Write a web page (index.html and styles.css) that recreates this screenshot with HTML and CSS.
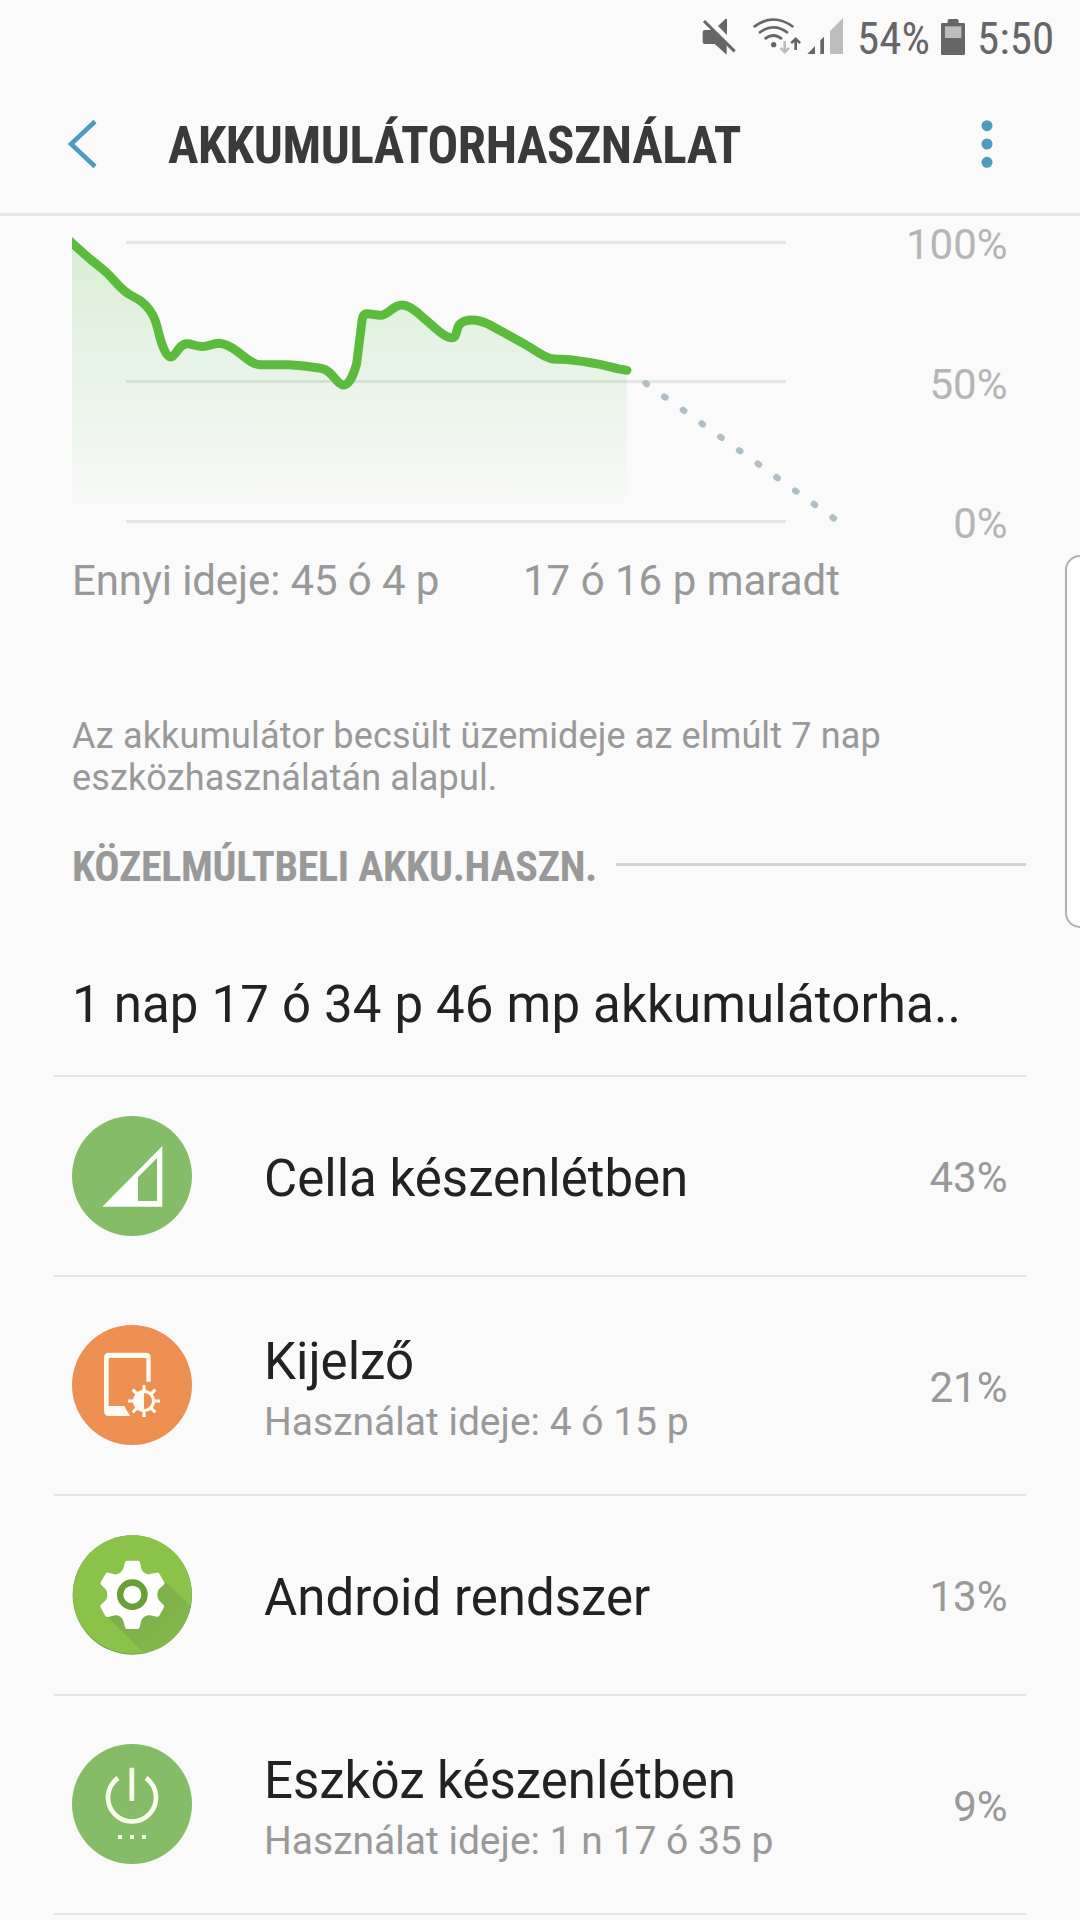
FILE: index.html
```html
<!DOCTYPE html>
<html lang="hu">
<head>
<meta charset="utf-8">
<title>Akkumulátorhasználat</title>
<link rel="stylesheet" href="styles.css">
</head>
<body>
<div class="screen">
  <div class="status-bar">
    <svg class="status-icon mute" viewBox="66 51 102 117" width="34" height="39">
      <path d="M74 90H96L114 108L140 134V164L104 132H74Q68 132 68 126V96Q68 90 74 90ZM114 78L136 57H141V105Z"/>
      <path d="M72 63L164 154" class="cut"/>
    </svg>
    <svg class="status-icon wifi" viewBox="216 51 150 117" width="50" height="39">
      <g class="arc"><path d="M221 81Q280 36 340 81"/><path d="M237 99Q280 65 324 99"/><path d="M254 117Q280 96 306 117"/></g>
      <circle cx="281" cy="134" r="8"/>
      <path class="faint" d="M310 123H318V147L325 141L330 146L314 162L299 146L304 141L310 147Z"/>
      <path d="M347 111L363 127L358 132L351 126V150H343V126L336 132L331 127Z"/>
    </svg>
    <svg class="status-icon signal" viewBox="381 51 111 117" width="37" height="39">
      <path d="M382 162L405 138V162ZM421 162V121L432 110V162Z"/>
      <path class="faint" d="M450 162V93L489 54V162Z"/>
    </svg>
    <span class="status-text percent">54%</span>
    <svg class="status-icon battery" viewBox="780 51 78 117" width="26" height="39">
      <path d="M787 69H803V62Q803 57 808 57H831Q836 57 836 62V69H851Q855 69 855 73V161Q855 165 851 165H787Q783 165 783 161V73Q783 69 787 69Z"/>
      <path class="faint" d="M795 79H844V114H795Z"/>
    </svg>
    <span class="status-text clock">5:50</span>
  </div>

  <header class="app-bar">
    <svg class="back" viewBox="0 0 32 52" width="32" height="52"><path d="M29 3.500L5 26L29 48.500"/></svg>
    <h1 class="title">AKKUMULÁTORHASZNÁLAT</h1>
    <svg class="more" viewBox="0 0 12 50" width="12" height="50"><circle cx="6" cy="6.700" r="5.500"/><circle cx="6" cy="25" r="5.500"/><circle cx="6" cy="43.300" r="5.500"/></svg>
  </header>

  <section class="chart">
    <svg class="plot" viewBox="72 216 780 320" width="780" height="320">
      <defs>
        <linearGradient id="fade" gradientUnits="userSpaceOnUse" x1="0" y1="242" x2="0" y2="514">
          <stop offset="0" stop-color="#5bbd3c" stop-opacity=".2"/>
          <stop offset=".5" stop-color="#5bbd5c" stop-opacity=".11"/>
          <stop offset="1" stop-color="#5bbd3c" stop-opacity="0"/>
        </linearGradient>
      </defs>
      <path class="grid" d="M126 242.500H786M126 381.500H786M126 521.500H786"/>
      <path class="area" d="M72 243L90 259C96 264 101 267.500 106.700 272.700C113 278.500 119 287 126.700 292.700C131 296 137 298 141.700 301.700C147 306 152 312 155 320C158 328 159 336 161.700 343.300C164 350 167 357 170.700 357C176 357 178 344 187 343.700C192 343.500 196 346.700 203 346.500C208 346.500 213 343.300 219 343.300C225 343.500 231 347 236.700 351C244 356 251 364.300 260 364.700H286.700C299 364.700 311 367 321.700 368.500C332 370 337 385 343.300 385C349 385 354 374 356.700 363.300L361.700 323.300C362.500 317 363 313.700 367.300 313.700C371 313.700 376 315.500 381 315.300C389 314.800 393 305 402 305C408 305 413 309 418.300 313.300L436.700 329.300C442 334 448 337.700 451.700 337.700C458 337.500 455 329 460 324C463 321 467 320 472.300 320C479 320 484 322 490 325L523.300 343.300C532 348 542 356 550 358.300C555 359.500 562 359 570 359.700C580 360.700 590 362.500 600 364.300C608 366 618 369 623.300 369.700L627 370.300V515H72Z"/>
      <path class="line" d="M66 237.500L72 243L90 259C96 264 101 267.500 106.700 272.700C113 278.500 119 287 126.700 292.700C131 296 137 298 141.700 301.700C147 306 152 312 155 320C158 328 159 336 161.700 343.300C164 350 167 357 170.700 357C176 357 178 344 187 343.700C192 343.500 196 346.700 203 346.500C208 346.500 213 343.300 219 343.300C225 343.500 231 347 236.700 351C244 356 251 364.300 260 364.700H286.700C299 364.700 311 367 321.700 368.500C332 370 337 385 343.300 385C349 385 354 374 356.700 363.300L361.700 323.300C362.500 317 363 313.700 367.300 313.700C371 313.700 376 315.500 381 315.300C389 314.800 393 305 402 305C408 305 413 309 418.300 313.300L436.700 329.300C442 334 448 337.700 451.700 337.700C458 337.500 455 329 460 324C463 321 467 320 472.300 320C479 320 484 322 490 325L523.300 343.300C532 348 542 356 550 358.300C555 359.500 562 359 570 359.700C580 360.700 590 362.500 600 364.300C608 366 618 369 623.300 369.700L627 370.300"/>
      <path class="forecast" d="M645.500 383.100L834.300 518.700"/>
    </svg>
    <div class="scale"><span>100%</span><span>50%</span><span>0%</span></div>
  </section>
  <div class="durations"><span class="elapsed">Ennyi ideje: 45 ó 4 p</span><span>17 ó 16 p maradt</span></div>

  <p class="note">Az akkumulátor becsült üzemideje az elmúlt 7 nap<br>eszközhasználatán alapul.</p>

  <div class="section-head"><h2 class="section-title">KÖZELMÚLTBELI AKKU.HASZN.</h2><span class="rule"></span></div>

  <div class="summary">1 nap 17 ó 34 p 46 mp akkumulátorha..</div>

  <ul class="list">
    <li class="row short">
      <svg class="icon" viewBox="66 78 360 360" width="120" height="120">
        <circle cx="246" cy="258" r="180" fill="#85bc67"/>
        <path fill="#fff" fill-rule="evenodd" d="M157 350L337 168V350ZM264 262V333H321V204Z"/>
      </svg>
      <div class="label"><span class="name">Cella készenlétben</span></div>
      <span class="value">43%</span>
    </li>
    <li class="row tall">
      <svg class="icon" viewBox="66 75 360 360" width="120" height="120">
        <circle cx="246" cy="255" r="180" fill="#ee8f52"/>
        <path fill="#fffaf2" fill-rule="evenodd" d="M177 158H287Q302 158 302 173V245H289V174H176V318H224L229 330L241 348H177Q162 348 162 333V173Q162 158 177 158Z"/>
        <g stroke="#fffaf2" stroke-width="9.500"><path d="M282 255V351M234 303H330M248 269L316 337M316 269L248 337"/></g>
        <circle cx="282" cy="303" r="33" fill="#fffaf2"/>
        <path fill="#ee8f52" d="M282 279A24 24 0 0 1 282 327Z"/>
      </svg>
      <div class="label"><span class="name">Kijelző</span><span class="sub">Használat ideje: 4 ó 15 p</span></div>
      <span class="value">21%</span>
    </li>
    <li class="row short">
      <svg class="icon" viewBox="66 75 360 360" width="120" height="120">
        <defs>
          <clipPath id="disc"><circle cx="247" cy="255" r="178"/></clipPath>
          <linearGradient id="shade" x1="0" y1="0" x2="1" y2="1"><stop offset="0" stop-color="#72a847"/><stop offset=".35" stop-color="#7cb04a"/><stop offset=".8" stop-color="#84b94c"/></linearGradient>
        </defs>
        <circle cx="247" cy="255" r="179" fill="#659c3c"/>
        <circle cx="247" cy="253.500" r="178" fill="#8bc34a"/>
        <path clip-path="url(#disc)" fill="url(#shade)" d="M170 318L292 440H440V305L335 205Z"/>
        <path fill="#fff" d="M231 152H264Q269 152 270 157L274 176Q276 183 283 188Q291 194 299 193L319 188Q325 187 328 191L343 217Q345 221 341 225L327 237Q322 243 322 254Q322 266 327 271L340 284Q344 288 342 292L328 317Q325 321 320 320L300 316Q291 314 283 320Q275 325 273 334L269 352Q268 357 263 357H231Q226 357 225 352L220 333Q218 325 211 320Q203 315 195 316L175 321Q169 322 166 318L152 292Q149 288 153 284L167 271Q172 264 172 254Q172 244 167 238L154 225Q150 221 152 217L167 191Q169 187 175 188L194 193Q202 194 210 188Q218 183 220 175L225 157Q226 152 231 152Z"/>
        <circle cx="247" cy="254" r="46" fill="#689f38"/><circle cx="247" cy="254" r="27" fill="#fff"/>
      </svg>
      <div class="label"><span class="name">Android rendszer</span></div>
      <span class="value">13%</span>
    </li>
    <li class="row tall">
      <svg class="icon" viewBox="66 72 360 360" width="120" height="120">
        <circle cx="246" cy="252" r="180" fill="#85bc67"/>
        <g fill="none" stroke="#fbfff0" stroke-width="14"><path d="M204 174A72 72 0 1 0 288 174M245.500 143V243"/></g>
        <path fill="#fbfff0" d="M204 345H216V357H204ZM240 345H252V357H240ZM276 345H288V357H276Z"/>
      </svg>
      <div class="label"><span class="name">Eszköz készenlétben</span><span class="sub">Használat ideje: 1 n 17 ó 35 p</span></div>
      <span class="value">9%</span>
    </li>
  </ul>
  <div class="edge-handle"></div>
</div>
</body>
</html>
```
FILE: styles.css
```css
* { box-sizing: border-box; margin: 0; padding: 0; }
body { background: #fafafa; }
.screen {
  position: relative;
  width: 1080px;
  height: 1920px;
  overflow: hidden;
  background: #fafafa;
  font-family: Roboto, "Liberation Sans", sans-serif;
  color: #222;
}
svg { display: block; flex: none; }

.status-bar { display: flex; height: 72px; padding: 17px 0 0 702px; }
.status-icon { fill: #666; }
.status-icon .faint { fill: #bdbdbd; }
.mute .cut { fill: none; stroke: #666; stroke-width: 9; }
.wifi { margin-left: 16px; }
.wifi .arc { fill: none; stroke: #666; stroke-width: 8; }
.signal { margin-left: 5px; }
.status-text {
  font-family: "Roboto Condensed", Roboto, sans-serif;
  font-size: 45px;
  line-height: 44px;
  color: #666;
  white-space: nowrap;
}
.percent { width: 83px; margin-left: 13px; }
.clock { margin-left: 11px; }

.app-bar {
  display: flex;
  align-items: center;
  height: 144px;
  padding: 3px 87px 0 66px;
  border-bottom: 3px solid #e6e6e6;
}
.back path { fill: none; stroke: #4d9cbd; stroke-width: 4.5; }
.title {
  flex: 1;
  margin-left: 70px;
  padding-top: 4px;
  font-family: "Roboto Condensed", Roboto, sans-serif;
  font-size: 51px;
  font-weight: 700;
  line-height: 60px;
  letter-spacing: -0.4px;
  color: #3a3a3a;
  white-space: nowrap;
}
.more { fill: #4d9cbd; }

.chart { display: flex; height: 320px; padding: 0 72.5px 0 72px; }
.plot .grid { stroke: #e4e4e4; stroke-width: 3; }
.plot .area { fill: url(#fade); }
.plot .line { fill: none; stroke: #5bbb3c; stroke-width: 8.9; stroke-linecap: round; stroke-linejoin: round; }
.plot .forecast { fill: none; stroke: #b0bec5; stroke-width: 6.4; stroke-linecap: round; stroke-dasharray: 1.6 21.425; }
.scale {
  flex: 1;
  display: flex;
  flex-direction: column;
  gap: 89.5px;
  padding-top: 4px;
  font-size: 42px;
  line-height: 50px;
  text-align: right;
  color: #b5b5b5;
}
.durations {
  display: flex;
  justify-content: space-between;
  width: 840px;
  margin-top: 20px;
  padding-left: 72px;
  font-size: 42px;
  line-height: 50px;
  color: #999;
}
.elapsed { letter-spacing: -0.1px; }
.note { margin: 109px 0 0 72px; font-size: 36px; line-height: 42px; letter-spacing: 0.14px; color: #999; }
.section-head { display: flex; align-items: center; gap: 19px; margin: 43px 54px 0 72px; }
.section-title {
  font-family: "Roboto Condensed", Roboto, sans-serif;
  font-size: 42px;
  font-weight: 700;
  line-height: 50px;
  letter-spacing: -0.28px;
  color: #999;
  white-space: nowrap;
}
.rule { flex: 1; height: 3px; margin-top: -5px; background: #d3d3d3; }
.summary { height: 60px; margin: 83px 0 0 72px; font-size: 51px; line-height: 60px; letter-spacing: 0.16px; white-space: nowrap; }

.list { margin: 40px 54px 0; border-top: 2px solid #e4e4e4; list-style: none; }
.row { display: flex; align-items: center; padding: 0 18.5px 0 18px; border-bottom: 2px solid #e4e4e4; }
.short { height: 200px; }
.tall { height: 219px; }
.tall .icon { margin-bottom: 2px; }
.label { flex: 1; display: flex; flex-direction: column; padding-top: 6px; margin-left: 72px; }
.tall .label { padding-top: 12px; }
.name { font-size: 51px; line-height: 60px; }
.sub { font-size: 39px; line-height: 60px; color: #999; }
.value { padding-top: 4px; font-size: 42px; line-height: 50px; color: #999; }

.edge-handle {
  position: absolute;
  top: 555px;
  left: 1065px;
  width: 30px;
  height: 373px;
  border: 2px solid #b0b0b0;
  border-radius: 24px;
  background: #fdfdfd;
}
```
